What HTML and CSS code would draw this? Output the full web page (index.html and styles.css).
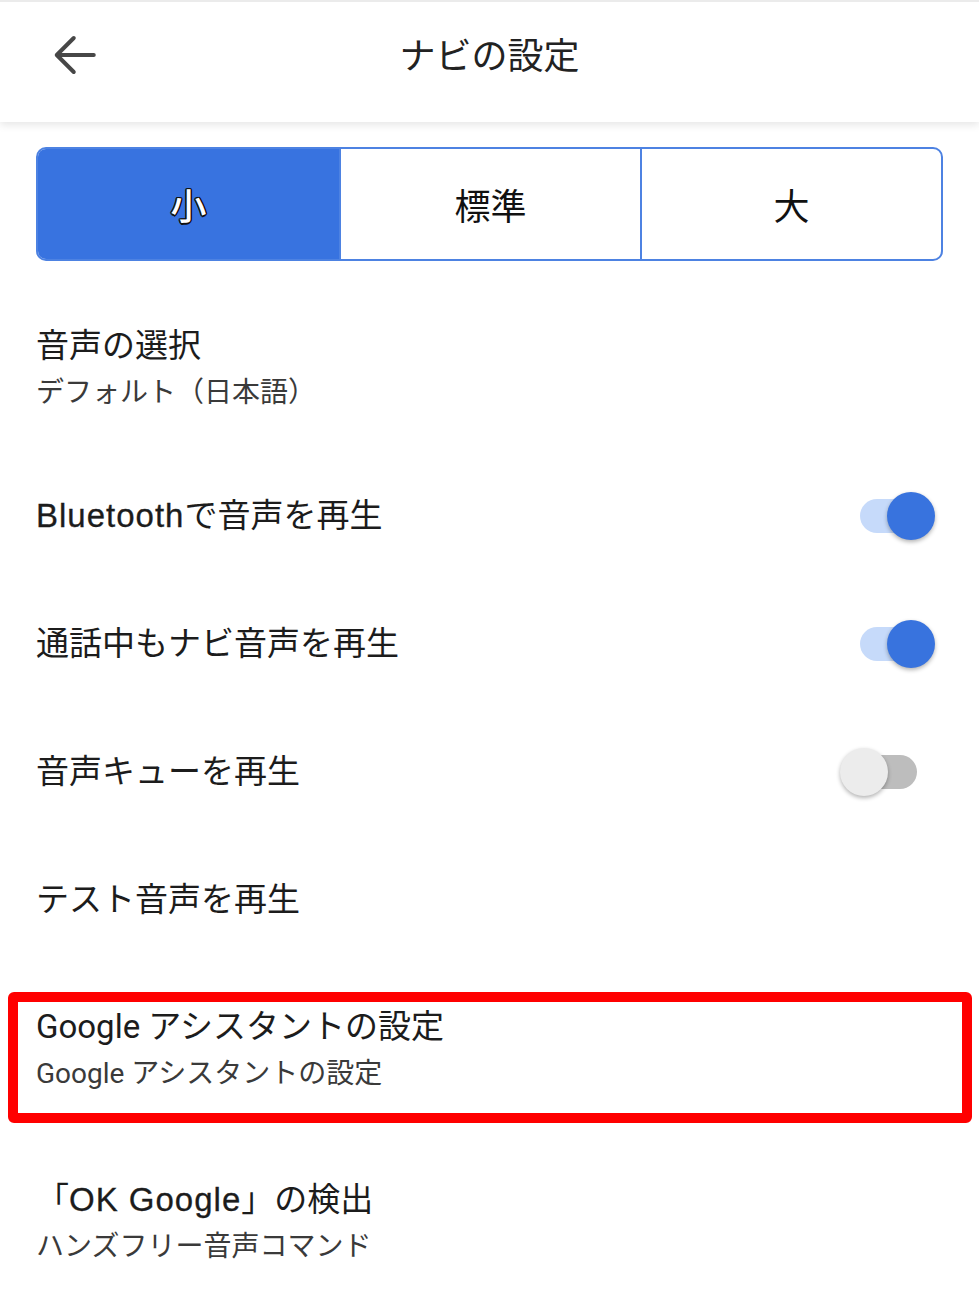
FILE: index.html
```html
<html>
<head>
<meta charset="utf-8">
<link rel="stylesheet" href="styles.css">
<title>ナビの設定</title>
</head>
<body>
<header class="top-bar">
	<div class="back">
		<svg width="60" height="60" viewBox="0 0 24 24" fill="none" stroke="#474747" stroke-width="1.6" stroke-linecap="round" stroke-linejoin="round">
			<path d="M19.5 12H5"/>
			<path d="M11.5 5.2L4.7 12l6.8 6.8"/>
		</svg>
	</div>
	<h1>ナビの設定</h1>
	<div></div>
</header>

<div class="segments">
	<div class="segment selected">小</div>
	<div class="segment">標準</div>
	<div class="segment">大</div>
</div>

<ul class="settings">
	<li class="row two-line">
		<div class="text">
			<div class="title">音声の選択</div>
			<div class="sub">デフォルト（日本語）</div>
		</div>
	</li>
	<li class="row">
		<div class="title"><span class="latin">Bluetooth</span>で音声を再生</div>
		<div class="switch on"><span class="knob"></span></div>
	</li>
	<li class="row">
		<div class="title">通話中もナビ音声を再生</div>
		<div class="switch on"><span class="knob"></span></div>
	</li>
	<li class="row">
		<div class="title">音声キューを再生</div>
		<div class="switch"><span class="knob"></span></div>
	</li>
	<li class="row">
		<div class="title">テスト音声を再生</div>
	</li>
	<li class="row highlight-row">
		<div class="highlight">
			<div class="text">
				<div class="title">Google アシスタントの設定</div>
				<div class="sub">Google アシスタントの設定</div>
			</div>
		</div>
	</li>
	<li class="row two-line">
		<div class="text">
			<div class="title">「<span class="latin">OK Google</span>」の検出</div>
			<div class="sub">ハンズフリー音声コマンド</div>
		</div>
	</li>
</ul>
</body>
</html>
```

FILE: styles.css
```css
body {
	margin: 0;
	background-color: #FFF;
	color: #1c1c1c;
	font-family: Roboto, "Noto Sans CJK JP", sans-serif;
}

.top-bar {
	height: 120px;
	border-top: 2px solid #ebebeb;
	display: grid;
	grid-template-columns: 1fr auto 1fr;
	align-items: center;
	box-shadow: 0 3px 8px rgba(0, 0, 0, 0.1);
	position: relative;
	z-index: 1;
}

.back {
	padding-left: 45px;
	padding-bottom: 14px;
	display: flex;
	align-items: center;
}

.top-bar h1 {
	margin: 0;
	font-size: 36px;
	font-weight: 400;
	color: #222;
	padding-bottom: 18px;
}

.segments {
	margin: 25px 36px 0 36px;
	height: 110px;
	border: 2px solid #4d82e2;
	border-radius: 10px;
	overflow: hidden;
	display: grid;
	grid-template-columns: 1fr 1fr 1fr;
}

.segment {
	display: flex;
	align-items: center;
	justify-content: center;
	font-size: 36px;
	color: #111;
	border-left: 2px solid #4d82e2;
}

.segment:first-child {
	border-left: none;
}

.segment.selected {
	background-color: #3873e0;
	color: #FFF;
	font-weight: 500;
	text-shadow: 1.5px 0 0 #111, -1.5px 0 0 #111, 0 1.5px 0 #111, 0 -1.5px 0 #111, 1px 1px 0 #111, -1px -1px 0 #111, 1px -1px 0 #111, -1px 1px 0 #111;
}

.settings {
	list-style: none;
	margin: 23px 0 0 0;
	padding: 0;
}

.row {
	height: 128px;
	padding-left: 36px;
	display: flex;
	align-items: center;
	justify-content: space-between;
}

.row.two-line {
	height: 168px;
}

.title {
	font-size: 33px;
	line-height: 44px;
	color: #1c1c1c;
}

.latin {
	font-family: "Liberation Sans", Arial, sans-serif;
	letter-spacing: 1px;
	-webkit-text-stroke: 0.3px #1c1c1c;
}

.sub {
	font-size: 28px;
	line-height: 40px;
	margin-top: 5px;
	color: #3a3a3a;
}

.highlight-row {
	height: 174px;
	padding-left: 8px;
	padding-right: 7px;
	align-items: flex-start;
}

.highlight {
	margin-top: 28px;
	flex: 1;
	height: 108px;
	border: 10px solid #ff0000;
	border-radius: 6px;
	padding: 3px 0 0 18px;
}

.switch {
	width: 57px;
	height: 34px;
	border-radius: 17px;
	background-color: #bdbdbd;
	margin-right: 62px;
	position: relative;
}

.switch.on {
	background-color: #c6dafa;
}

.knob {
	position: absolute;
	top: -7px;
	left: -20px;
	width: 48px;
	height: 48px;
	border-radius: 50%;
	background-color: #ececec;
	box-shadow: 0 2px 4px rgba(0, 0, 0, 0.3);
}

.switch.on .knob {
	left: 27px;
	background-color: #3873de;
}
```
